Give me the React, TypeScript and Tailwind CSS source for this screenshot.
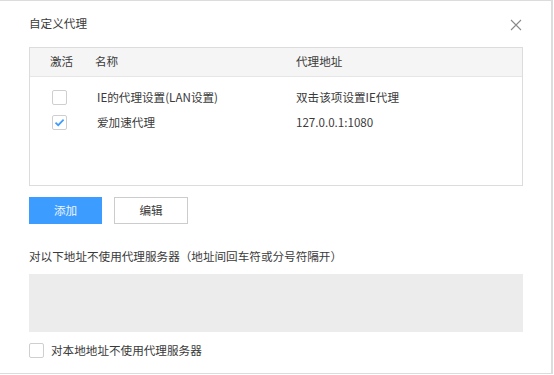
const font = { fontFamily: '"Noto Sans CJK SC", "Noto Sans", sans-serif' };

type Row = { active: boolean; name: string; addr: string };

const rows: Row[] = [
  { active: false, name: "IE的代理设置(LAN设置)", addr: "双击该项设置IE代理" },
  { active: true, name: "爱加速代理", addr: "127.0.0.1:1080" },
];

const CheckBox = ({ checked }: { checked: boolean }) => (
  <div className="w-[15px] h-[15px] border border-[#cfcfcf] rounded-[2px] bg-white flex items-center justify-center">
    {checked && (
      <svg width="11" height="9" viewBox="0 0 11 9">
        <path d="M1.5 4.6 L4.2 7.2 L9.6 1.6" fill="none" stroke="#3d9cff" strokeWidth="1.7" />
      </svg>
    )}
  </div>
);

export default function App() {
  return (
    <div className="w-[554px] h-[375px] bg-white text-[11.6px] text-[#3a3a3a]" style={font}>
      <div className="relative w-[553px] h-[374px] border-t border-r-2 border-b border-[#dcdcdc] pl-[29px]">
        <div className="h-[46px] flex items-center">自定义代理</div>
        <button className="absolute left-[509px] top-[17px] w-[14px] h-[14px] flex items-center justify-center">
          <svg width="12" height="12" viewBox="0 0 12 12">
            <path d="M1 1 L11 11 M11 1 L1 11" stroke="#8a8a8a" strokeWidth="1.1" />
          </svg>
        </button>

        <div className="w-[494px] h-[139px] border border-[#dcdcdc]">
          <div className="h-[29px] bg-[#f5f5f5] border-b border-[#e6e6e6] flex items-center">
            <div className="w-[65px] pl-[20px]">激活</div>
            <div className="w-[201px]">名称</div>
            <div>代理地址</div>
          </div>
          <div className="pt-[8px]">
            {rows.map((r, i) => (
              <div key={i} className="h-[25px] flex items-center">
                <div className="w-[65px] pl-[22px]">
                  <CheckBox checked={r.active} />
                </div>
                <div className="w-[201px] pl-[2px]">{r.name}</div>
                <div>{r.addr}</div>
              </div>
            ))}
          </div>
        </div>

        <div className="mt-[11px] flex gap-[12px]">
          <button className="w-[73px] h-[27px] bg-[#3d9cff] text-white/90">添加</button>
          <button className="w-[74px] h-[27px] bg-white border border-[#cccccc]">编辑</button>
        </div>

        <div className="mt-[24px] h-[17px] flex items-center">对以下地址不使用代理服务器（地址间回车符或分号符隔开）</div>
        <div className="mt-[9px] w-[494px] h-[58px] bg-[#ececec]"></div>

        <div className="mt-[10px] flex items-center gap-[7px]">
          <CheckBox checked={false} />
          <span>对本地地址不使用代理服务器</span>
        </div>
      </div>
    </div>
  );
}
